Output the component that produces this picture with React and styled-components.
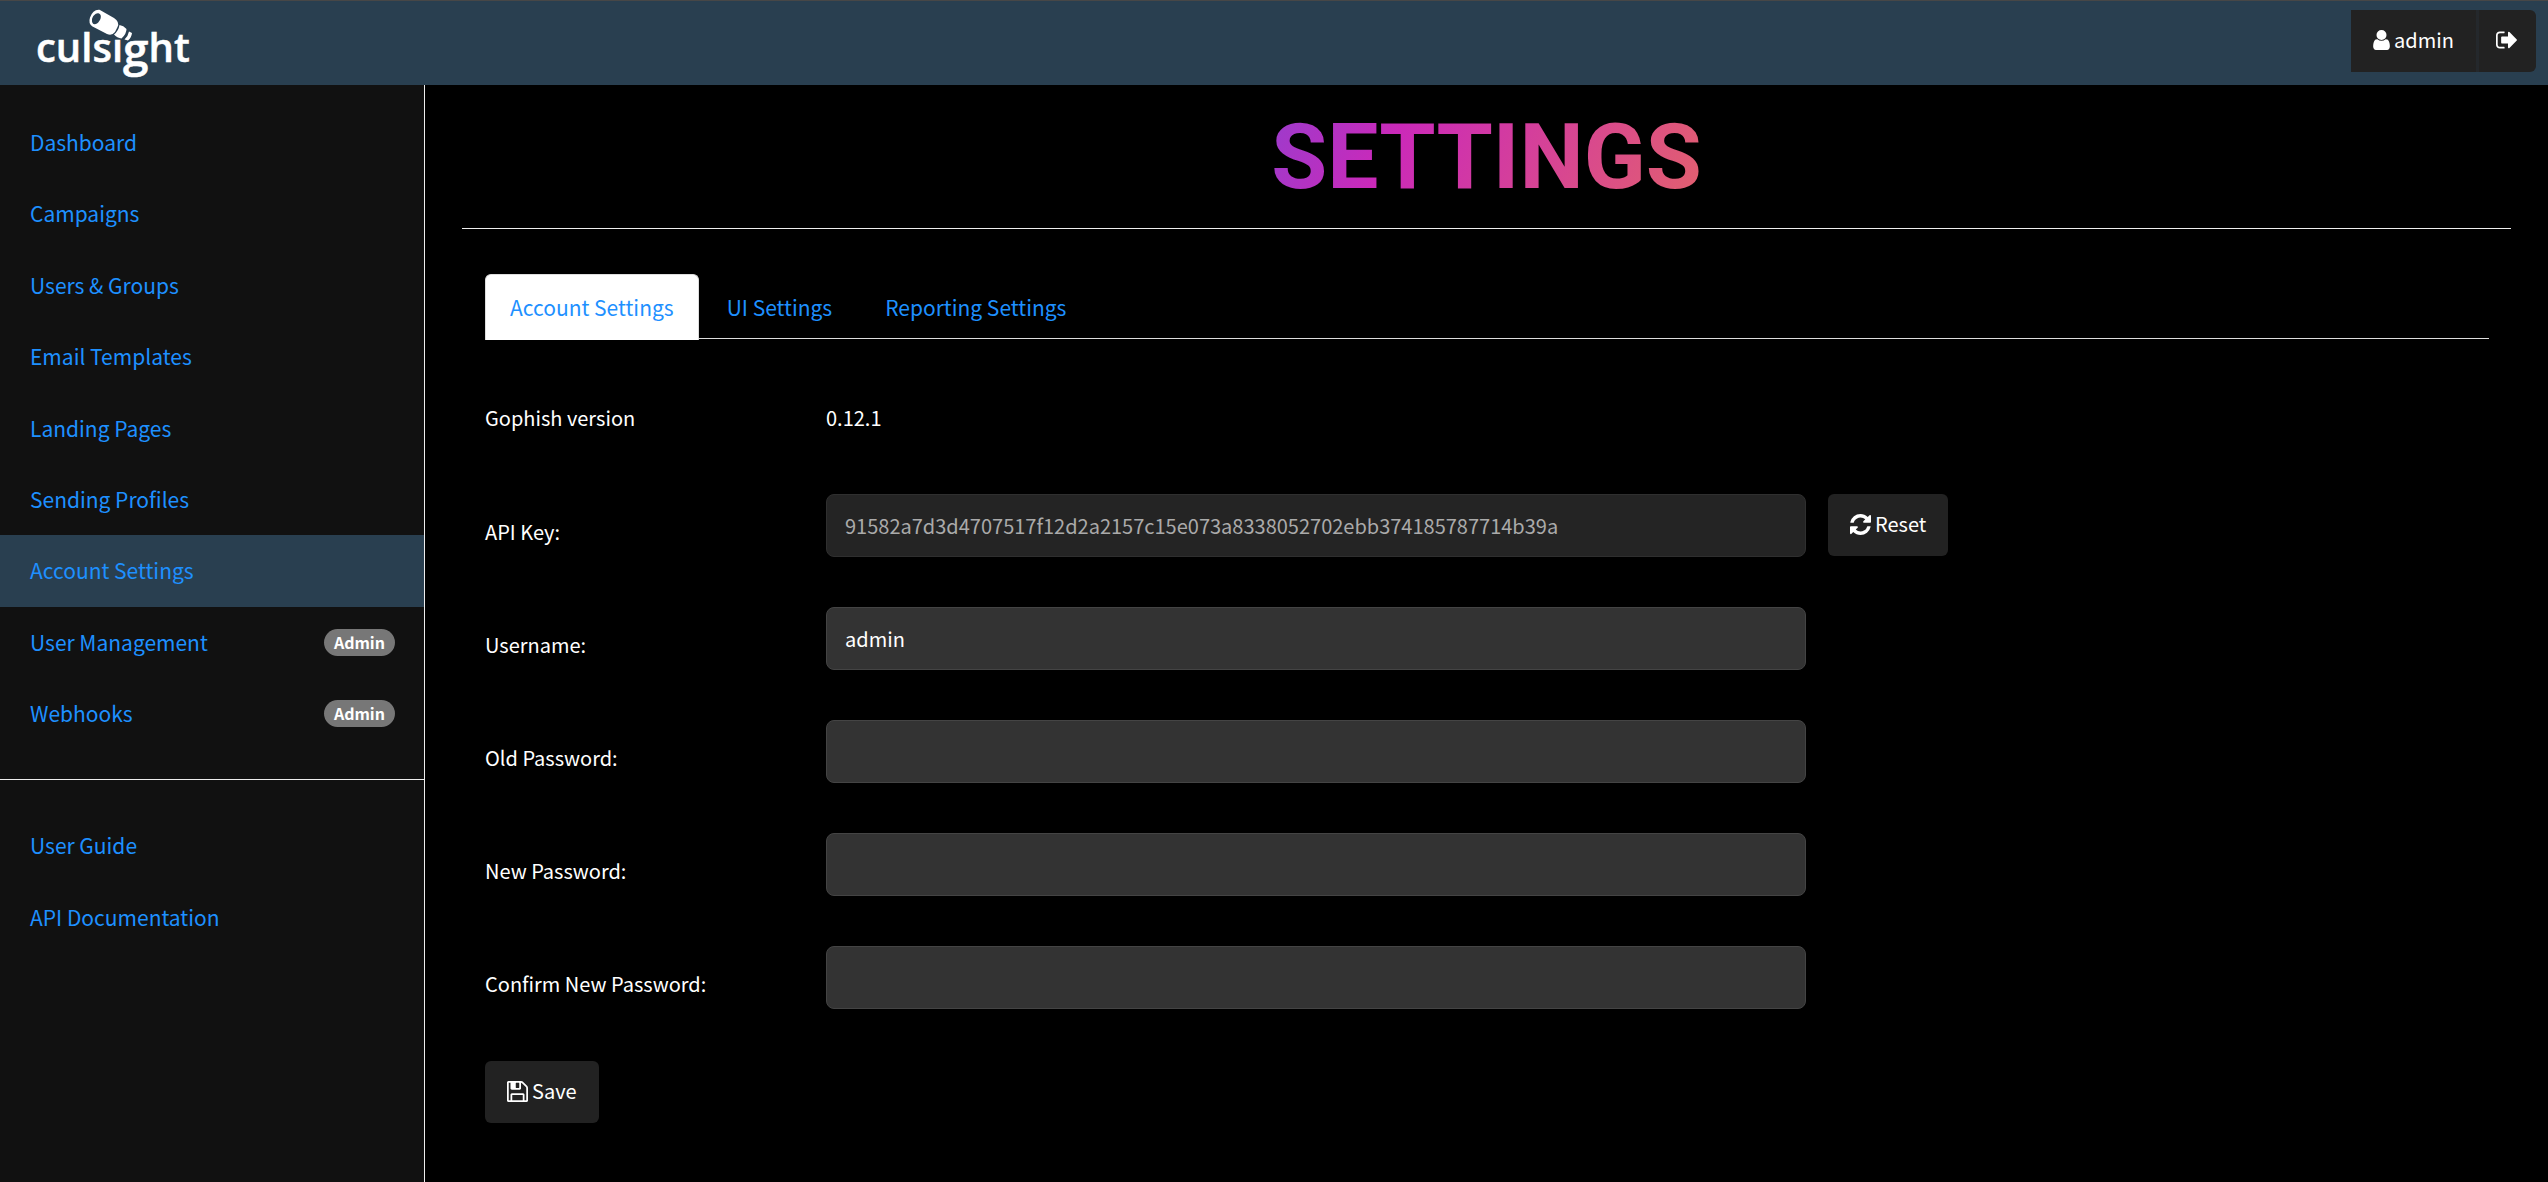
import React from "react";
import styled, { createGlobalStyle } from "styled-components";

const Global = createGlobalStyle`
  *, *::before, *::after { box-sizing: border-box; }
  html, body, #root { height: 100%; }
  body {
    margin: 0;
    background: #000;
    color: #fff;
    font-family: "Noto Sans CJK SC", "Open Sans", sans-serif;
    font-size: 20px;
    line-height: 32px;
  }
`;

const Page = styled.div`
  min-height: 100%;
  display: flex;
  flex-direction: column;
`;

const Header = styled.header`
  display: flex;
  justify-content: space-between;
  align-items: flex-start;
  height: 85px;
  padding: 9px 12px 0 36px;
  border-top: 1px solid #474747;
  background: #293f50;
`;

const LogoLink = styled.a`
  display: block;
  color: #fff;
  svg { display: block; }
`;

const ButtonGroup = styled.div`
  display: flex;
`;

const Button = styled.button`
  display: inline-flex;
  align-items: center;
  gap: 4px;
  height: 62px;
  padding: 0 22px 2px;
  border: 0;
  border-radius: 6px;
  background: #222;
  color: #fff;
  font: inherit;
  svg { flex: none; }
`;

const UserButton = styled(Button)`
  border-radius: 0;
`;

const LogoutButton = styled(Button)`
  padding: 0 19px 2px 17px;
  border-left: 3px solid #24282c;
  border-radius: 0 6px 6px 0;
`;

const Body = styled.div`
  flex: 1;
  display: flex;
`;

const Sidebar = styled.nav`
  flex: none;
  width: 425px;
  padding-top: 22px;
  border-right: 1px solid #eee;
  background: #111;
`;

const NavList = styled.ul`
  margin: 0;
  padding: 0;
  list-style: none;
`;

const NavLink = styled.a`
  display: flex;
  align-items: center;
  justify-content: space-between;
  padding: 19px 29px 19px 30px;
  background: ${(p) => (p.$active ? "#293f50" : "transparent")};
  color: #1e90ff;
  font-size: 21px;
  line-height: 1.59;
  text-decoration: none;
`;

const Badge = styled.span`
  padding: 0 10px;
  border-radius: 14px;
  background: #777;
  color: #fff;
  font-size: 16px;
  font-weight: 700;
  line-height: 27px;
`;

const NavDivider = styled.hr`
  height: 1px;
  margin: 30px 0;
  border: 0;
  background: #eee;
`;

const Main = styled.main`
  flex: 1;
  padding: 23px 37px 48px;
`;

const Title = styled.h1`
  margin: 0;
  padding-bottom: 22px;
  background: linear-gradient(115deg, #9f3acb 39%, #cb29b9 45%, #e2606e 61%);
  background-clip: text;
  -webkit-background-clip: text;
  color: transparent;
  font-family: Roboto, sans-serif;
  font-size: 91px;
  font-weight: 700;
  line-height: 98px;
  text-align: center;
`;

const Rule = styled.hr`
  height: 1px;
  margin: 0;
  border: 0;
  background: #eee;
`;

const Panel = styled.section`
  padding: 45px 22px 0 23px;
`;

const Tabs = styled.div`
  display: flex;
  gap: 3px;
  border-bottom: 1px solid #ddd;
`;

const Tab = styled.button`
  height: 66px;
  margin-bottom: -2px;
  padding: 0 24px 2px;
  border: 1px solid ${(p) => (p.$active ? "#ddd" : "transparent")};
  border-bottom: 0;
  border-radius: 6px 6px 0 0;
  background: ${(p) => (p.$active ? "#fff" : "transparent")};
  color: #1e90ff;
  font: inherit;
  font-size: 21px;
`;

const Form = styled.form`
  display: grid;
  gap: 50px;
  padding-top: 63px;
`;

const Row = styled.div`
  display: grid;
  grid-template-columns: 319px 980px auto;
  column-gap: 22px;
  justify-content: start;
`;

const VersionRow = styled(Row)`
  height: 42px;
`;

const Label = styled.label`
  padding-top: 22px;
`;

const Field = styled.input`
  width: 100%;
  height: 63px;
  padding: 0 18px;
  border: 1px solid #444;
  border-radius: 8px;
  background: #333;
  color: #fff;
  font: inherit;
  &:disabled { background: #242424; border-color: #2f2f2f; color: #aaa; }
`;

const Actions = styled.div`
  padding-top: 2px;
`;

const UserIcon = () => (
  <svg width="17" height="20" viewBox="256 128 1280 1536" fill="currentColor" aria-hidden="true">
    <path d="M1536 1399q0 109-62.500 187t-150.500 78h-854q-88 0-150.500-78t-62.500-187q0-85 8.500-160.500t31.500-152 58.500-131 94-89 134.500-34.500q131 128 313 128t313-128q76 0 134.500 34.500t94 89 58.500 131 31.500 152 8.500 160.500zm-256-887q0 159-112.500 271.500t-271.500 112.500-271.500-112.500-112.500-271.500 112.500-271.500 271.500-112.500 271.500 112.500 112.500 271.500z" />
  </svg>
);

const SignOutIcon = () => (
  <svg width="21" height="18" viewBox="64 230 1568 1332" fill="currentColor" aria-hidden="true">
    <path d="M704 1440q0 4 1 20t.5 26.500-3 23.500-10 19.500-20.500 6.500h-320q-119 0-203.500-84.500t-84.500-203.500v-704q0-119 84.500-203.500t203.500-84.500h320q13 0 22.500 9.500t9.500 22.500q0 4 1 20t.5 26.500-3 23.500-10 19.500-20.500 6.500h-320q-66 0-113 47t-47 113v704q0 66 47 113t113 47h312l11.500 1 11.500 3 8 5.500 7 9 2 13.500zm928-544q0 26-19 45l-544 544q-19 19-45 19t-45-19-19-45v-288h-448q-26 0-45-19t-19-45v-384q0-26 19-45t45-19h448v-288q0-26 19-45t45-19 45 19l544 544q19 19 19 45z" />
  </svg>
);

const RefreshIcon = () => (
  <svg width="21" height="21" viewBox="0 0 1536 1536" fill="currentColor" aria-hidden="true">
    <path d="M1511 928q0 5-1 7-64 268-268 434.500t-478 166.500q-146 0-282.500-55t-243.500-157l-129 129q-19 19-45 19t-45-19-19-45v-448q0-26 19-45t45-19h448q26 0 45 19t19 45-19 45l-137 137q71 66 161 102t187 36q134 0 250-65t186-179q11-17 53-117 8-23 30-23h192q13 0 22.500 9.500t9.500 22.500zM1536 128v448q0 26-19 45t-45 19h-448q-26 0-45-19t-19-45 19-45l138-138q-148-137-349-137-134 0-250 65t-186 179q-11 17-53 117-8 23-30 23h-199q-13 0-22.500-9.500t-9.500-22.500v-7q65-268 270-434.500t480-166.500q146 0 284 55.500t245 156.500l130-129q19-19 45-19t45 19 19 45z" />
  </svg>
);

const SaveIcon = () => (
  <svg width="21" height="21" viewBox="0 0 1536 1536" fill="currentColor" aria-hidden="true">
    <path d="M384 1408h768v-384h-768v384zm896 0h128v-896q0-14-10-38.500t-20-34.500l-281-281q-10-10-34-20t-39-10v416q0 40-28 68t-68 28h-576q-40 0-68-28t-28-68v-416h-128v1280h128v-416q0-40 28-68t68-28h832q40 0 68 28t28 68v416zm-384-928v-320q0-13-9.500-22.500t-22.500-9.500h-192q-13 0-22.500 9.500t-9.500 22.500v320q0 13 9.500 22.500t22.500 9.500h192q13 0 22.500-9.500t9.500-22.500zm640 32v928q0 40-28 68t-68 28h-1344q-40 0-68-28t-28-68v-1344q0-40 28-68t68-28h928q40 0 88 20t76 48l280 280q28 28 48 76t20 88z" />
  </svg>
);

const Logo = () => (
  <svg width="154" height="70" viewBox="36 10 154 70" overflow="visible" aria-label="culsight" role="img">
    <text x="36" y="62" fill="#fff" stroke="#fff" strokeWidth="0.5" fontFamily="Open Sans" fontWeight="600" fontSize="40">
      culsı<tspan fontSize="46" dy="4">g</tspan><tspan dy="-4">ht</tspan>
    </text>
    <path
      fill="#fff"
      fillRule="evenodd"
      d="M99.500 9.700 L114 18 Q120 22 117.500 27 L115 32 Q112 36 107 34 L92.500 26.500 Q88 23.500 90 17.500 Q93 9 99.500 9.700 Z
         M99 13.500 C96.500 12 92.500 15.500 92 19.500 C91.500 23.500 94 25.500 97 23.500 C100.500 21 102.500 15 99 13.500 Z"
    />
    <path fill="#fff" d="M119.500 25 Q123.500 25.500 126.500 29 Q126.500 34 121.500 38.500 Q117 38 114 34.500 Q118.500 31 119.500 25 Z" />
    <path fill="#fff" d="M129 31.500 L132 33 Q131.500 37.500 128 40.500 L124.500 39.500 Q128 36.500 129 31.500 Z" />
  </svg>
);

const links = [
  { text: "Dashboard" },
  { text: "Campaigns" },
  { text: "Users & Groups" },
  { text: "Email Templates" },
  { text: "Landing Pages" },
  { text: "Sending Profiles" },
  { text: "Account Settings", active: true },
  { text: "User Management", admin: true },
  { text: "Webhooks", admin: true },
];

const passwords = [
  { id: "old", label: "Old Password:" },
  { id: "new", label: "New Password:" },
  { id: "confirm", label: "Confirm New Password:" },
];

const NavItem = ({ text, active, admin }) => (
  <li>
    <NavLink href="#" $active={active}>
      {text}
      {admin && <Badge>Admin</Badge>}
    </NavLink>
  </li>
);

export default function App() {
  return (
    <Page>
      <Global />
      <Header>
        <LogoLink href="#"><Logo /></LogoLink>
        <ButtonGroup>
          <UserButton type="button"><UserIcon />admin</UserButton>
          <LogoutButton type="button" aria-label="Log out"><SignOutIcon /></LogoutButton>
        </ButtonGroup>
      </Header>
      <Body>
        <Sidebar>
          <NavList>{links.map((l) => <NavItem key={l.text} {...l} />)}</NavList>
          <NavDivider />
          <NavList>
            <NavItem text="User Guide" />
            <NavItem text="API Documentation" />
          </NavList>
        </Sidebar>
        <Main>
          <Title>SETTINGS</Title>
          <Rule />
          <Panel>
            <Tabs role="tablist">
              <Tab type="button" role="tab" aria-selected="true" $active>Account Settings</Tab>
              <Tab type="button" role="tab">UI Settings</Tab>
              <Tab type="button" role="tab">Reporting Settings</Tab>
            </Tabs>
            <Form onSubmit={(e) => e.preventDefault()}>
              <VersionRow>
                <span>Gophish version</span>
                <span>0.12.1</span>
              </VersionRow>
              <Row>
                <Label htmlFor="api">API Key:</Label>
                <Field id="api" disabled defaultValue="91582a7d3d4707517f12d2a2157c15e073a8338052702ebb374185787714b39a" />
                <Button type="button"><RefreshIcon />Reset</Button>
              </Row>
              <Row>
                <Label htmlFor="username">Username:</Label>
                <Field id="username" defaultValue="admin" />
              </Row>
              {passwords.map((p) => (
                <Row key={p.id}>
                  <Label htmlFor={p.id}>{p.label}</Label>
                  <Field id={p.id} type="password" />
                </Row>
              ))}
              <Actions><Button type="submit"><SaveIcon />Save</Button></Actions>
            </Form>
          </Panel>
        </Main>
      </Body>
    </Page>
  );
}
